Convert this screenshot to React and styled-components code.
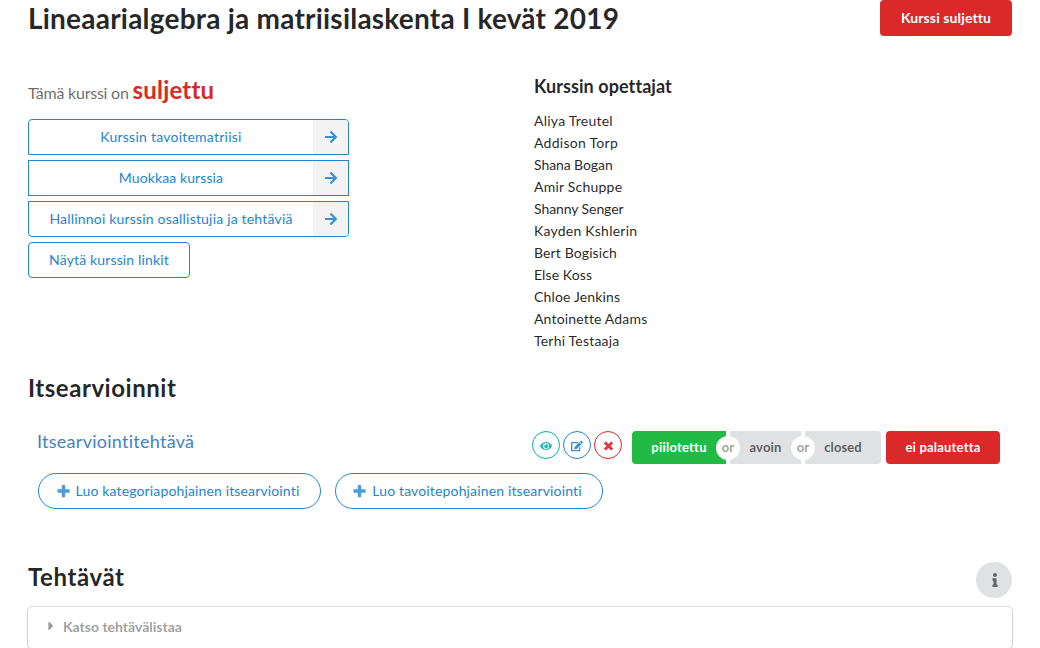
import React from "react";
import styled, { createGlobalStyle } from "styled-components";
import { FaArrowRight, FaEye, FaEdit, FaInfo, FaCaretRight } from "react-icons/fa";

const GlobalStyle = createGlobalStyle`
  *, *::before, *::after { box-sizing: border-box; }
  html, body { margin: 0; background: #fff; }
  body {
    height: 648px;
    overflow: hidden;
    font: 14px/20px Lato, "Liberation Sans", sans-serif;
    font-variant-ligatures: none;
    color: rgba(0, 0, 0, 0.87);
  }
  button { font-family: inherit; font-variant-ligatures: none; margin: 0; white-space: nowrap; }
  svg { display: block; flex: none; }
`;

const Page = styled.main`
  height: 648px;
  padding: 0 28px;
`;

const TitleRow = styled.header`
  display: flex;
  justify-content: space-between;
  height: 36px;
`;

const PageTitle = styled.h1`
  margin: 0;
  font-size: 28px;
  line-height: 36px;
  font-weight: 700;
  letter-spacing: 0.22px;
`;

const SolidButton = styled.button`
  width: ${(p) => p.$width}px;
  height: ${(p) => (p.$small ? 33 : 36)}px;
  padding: 0 0 2px;
  border: 0;
  border-radius: ${(p) => p.$radius || "4px"};
  background: ${(p) => p.$bg};
  color: ${(p) => p.$color || "#fff"};
  font-size: ${(p) => (p.$small ? 13 : 14)}px;
  font-weight: 700;
  letter-spacing: ${(p) => p.$track || 0}px;
`;

const Info = styled.section`
  display: grid;
  grid-template-columns: 506px 1fr;
  height: 316px;
  padding-top: 40px;
`;

const Status = styled.p`
  margin: -1px 0 0;
  height: 44px;
  line-height: 30px;
  font-size: 16px;
  letter-spacing: -0.22px;
  color: rgba(0, 0, 0, 0.6);
  strong {
    font-size: 24px;
    letter-spacing: 0.18px;
    color: #db2828;
  }
`;

const Actions = styled.nav`
  display: flex;
  flex-direction: column;
  align-items: flex-start;
  gap: 5px;
`;

const OutlineButton = styled.button`
  display: flex;
  align-items: center;
  justify-content: center;
  width: ${(p) => p.$width}px;
  height: 36px;
  padding: 0;
  overflow: hidden;
  border: 1px solid #2185d0;
  border-radius: ${(p) => p.$radius || "4px"};
  background: #fff;
  color: #2185d0;
  font-size: 14px;
  letter-spacing: ${(p) => p.$track || 0}px;
`;

const ButtonText = styled.span`
  flex: ${(p) => (p.$grow ? 1 : "none")};
  padding-bottom: 2px;
  text-align: center;
`;

const ArrowCell = styled.span`
  display: flex;
  align-items: center;
  justify-content: center;
  width: 35px;
  height: 34px;
  background: #f3f3f3;
  color: #3590d5;
`;

const TeachersTitle = styled.h3`
  margin: -1px 0 13px;
  font-size: 18px;
  line-height: 22px;
  letter-spacing: 0.08px;
`;

const Teachers = styled.ul`
  margin: 0;
  padding: 0;
  list-style: none;
`;

const Teacher = styled.li`
  line-height: 22px;
  letter-spacing: ${(p) => p.$track}px;
`;

const SectionTitle = styled.h2`
  margin: -1px 0 0;
  font-size: 24px;
  line-height: 31px;
  letter-spacing: ${(p) => p.$track}px;
`;

const Assessments = styled.section`
  height: 210px;
  padding-top: 21px;
`;

const AssessmentRow = styled.div`
  display: flex;
  align-items: flex-start;
  height: 42px;
  margin: 28px 0 0;
  padding: 0 12px 0 9px;
`;

const AssessmentLink = styled.a`
  flex: 1;
  font-size: 18px;
  line-height: 21px;
  letter-spacing: 0.27px;
  color: #4183c4;
`;

const CircleButtons = styled.div`
  display: flex;
  gap: 3px;
  margin-right: 10px;
`;

const CircleButton = styled.button`
  display: flex;
  align-items: center;
  justify-content: center;
  width: 28px;
  height: 28px;
  padding: 2px 0 0;
  border: 1px solid ${(p) => p.$color};
  border-radius: 50%;
  background: #fff;
  color: ${(p) => p.$color};
  svg { opacity: 0.9; }
`;

const StateButtons = styled.div`
  display: flex;
  margin-right: 5px;
`;

const Or = styled.span`
  position: relative;
  width: 4px;
  height: 33px;
  &::after {
    content: "or";
    position: absolute;
    top: 5px;
    left: -10px;
    width: 24px;
    height: 24px;
    border-radius: 50%;
    background: #fff;
    color: rgba(0, 0, 0, 0.4);
    font-size: 13px;
    font-weight: 700;
    line-height: 22px;
    text-align: center;
  }
`;

const CreateRow = styled.div`
  display: flex;
  gap: 14px;
  padding-left: 10px;
  svg { margin-right: 6px; opacity: 0.8; }
  button { padding-right: 3px; }
`;

const TasksHeader = styled.header`
  display: flex;
  justify-content: space-between;
  height: 45px;
`;

const InfoButton = styled.button`
  display: flex;
  align-items: center;
  justify-content: center;
  width: 36px;
  height: 36px;
  padding: 0 0 0 1px;
  border: 0;
  border-radius: 50%;
  background: #e0e1e2;
  color: #666768;
`;

const Accordion = styled.div`
  display: flex;
  align-items: center;
  height: 41px;
  padding: 0 0 1px 16px;
  border-radius: 4px;
  box-shadow: 0 1px 2px 0 rgba(34, 36, 38, 0.15), 0 0 0 1px rgba(34, 36, 38, 0.15);
  color: rgba(0, 0, 0, 0.4);
  font-weight: 700;
  svg { margin: -2px 5px 0 0; }
`;

const PlusIcon = () => (
  <svg width="13" height="14" viewBox="0 0 448 512" fill="currentColor">
    <path d="M448 294.2v-76.4c0-13.3-10.7-24-24-24H286.2V56c0-13.3-10.7-24-24-24h-76.4c-13.3 0-24 10.7-24 24v137.8H24c-13.3 0-24 10.7-24 24v76.4c0 13.3 10.7 24 24 24h137.8V456c0 13.3 10.7 24 24 24h76.4c13.3 0 24-10.7 24-24V318.2H424c13.3 0 24-10.7 24-24z" />
  </svg>
);

const CrossIcon = () => (
  <svg width="9" height="12" viewBox="0 0 384 512" fill="currentColor">
    <path d="M323.1 441l53.9-53.9c9.4-9.4 9.4-24.5 0-33.9L279.8 256l97.2-97.2c9.4-9.4 9.4-24.5 0-33.9L323.1 71c-9.4-9.4-24.5-9.4-33.9 0L192 168.2 94.8 71c-9.4-9.4-24.5-9.4-33.9 0L7 124.9c-9.4 9.4-9.4 24.5 0 33.9l97.2 97.2L7 353.2c-9.4 9.4-9.4 24.5 0 33.9L60.9 441c9.4 9.4 24.5 9.4 33.9 0l97.2-97.2 97.2 97.2c9.3 9.3 24.5 9.3 33.9 0z" />
  </svg>
);

const actions = [
  { label: "Kurssin tavoitematriisi", radius: "4px 4px 0 0", track: 0.24 },
  { label: "Muokkaa kurssia", radius: "0px", track: 0.1 },
  { label: "Hallinnoi kurssin osallistujia ja tehtäviä", radius: "0 0 4px 4px", track: 0.19 },
];

const teachers = [
  ["Aliya Treutel", 0.24],
  ["Addison Torp", 0.27],
  ["Shana Bogan", -0.08],
  ["Amir Schuppe", 0.22],
  ["Shanny Senger", -0.08],
  ["Kayden Kshlerin", 0.24],
  ["Bert Bogisich", 0.12],
  ["Else Koss", 0.1],
  ["Chloe Jenkins", 0.16],
  ["Antoinette Adams", 0.16],
  ["Terhi Testaaja", 0.2],
];

export default function App() {
  return (
    <Page>
      <GlobalStyle />
      <TitleRow>
        <PageTitle>Lineaarialgebra ja matriisilaskenta I kevät 2019</PageTitle>
        <SolidButton $width={132} $bg="#db2828" $track={0.12}>Kurssi suljettu</SolidButton>
      </TitleRow>
      <Info>
        <div>
          <Status>Tämä kurssi on <strong>suljettu</strong></Status>
          <Actions>
            {actions.map((a) => (
              <OutlineButton key={a.label} $width={321} $radius={a.radius} $track={a.track}>
                <ButtonText $grow>{a.label}</ButtonText>
                <ArrowCell><FaArrowRight size={14} /></ArrowCell>
              </OutlineButton>
            ))}
            <OutlineButton $width={162} $track={0.15}><ButtonText>Näytä kurssin linkit</ButtonText></OutlineButton>
          </Actions>
        </div>
        <div>
          <TeachersTitle>Kurssin opettajat</TeachersTitle>
          <Teachers>{teachers.map(([name, track]) => <Teacher key={name} $track={track}>{name}</Teacher>)}</Teachers>
        </div>
      </Info>
      <Assessments>
        <SectionTitle $track={0.53}>Itsearvioinnit</SectionTitle>
        <AssessmentRow>
          <AssessmentLink>Itsearviointitehtävä</AssessmentLink>
          <CircleButtons>
            <CircleButton $color="#00b5ad"><FaEye size={12} /></CircleButton>
            <CircleButton $color="#2185d0"><FaEdit size={12} /></CircleButton>
            <CircleButton $color="#db2828"><CrossIcon /></CircleButton>
          </CircleButtons>
          <StateButtons>
            <SolidButton $small $width={94} $bg="#21ba45" $radius="4px 0 0 4px" $track={0.22}>piilotettu</SolidButton>
            <Or />
            <SolidButton $small $width={71} $bg="#e0e1e2" $color="rgba(0,0,0,.6)" $radius="0px" $track={0.2}>avoin</SolidButton>
            <Or />
            <SolidButton $small $width={76} $bg="#e0e1e2" $color="rgba(0,0,0,.6)" $radius="0 4px 4px 0" $track={0.1}>closed</SolidButton>
          </StateButtons>
          <SolidButton $small $width={114} $bg="#db2828" $track={0.2}>ei palautetta</SolidButton>
        </AssessmentRow>
        <CreateRow>
          <OutlineButton $width={283} $radius="18px" $track={0.14}><PlusIcon /><ButtonText>Luo kategoriapohjainen itsearviointi</ButtonText></OutlineButton>
          <OutlineButton $width={268} $radius="18px" $track={0.15}><PlusIcon /><ButtonText>Luo tavoitepohjainen itsearviointi</ButtonText></OutlineButton>
        </CreateRow>
      </Assessments>
      <TasksHeader>
        <SectionTitle $track={0.6}>Tehtävät</SectionTitle>
        <InfoButton><FaInfo size={14} /></InfoButton>
      </TasksHeader>
      <Accordion><FaCaretRight size={14} />Katso tehtävälistaa</Accordion>
    </Page>
  );
}
